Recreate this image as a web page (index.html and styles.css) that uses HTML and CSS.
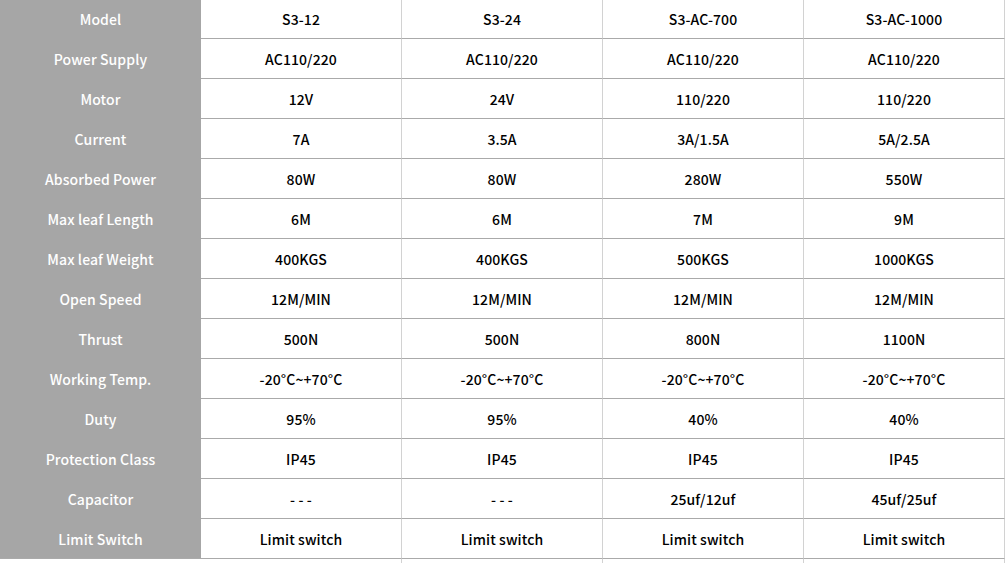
FILE: index.html
```html
<!DOCTYPE html>
<html>
<head>
<meta charset="utf-8">
<link rel="stylesheet" href="styles.css">
</head>
<body>
<table class="spec">
  <tbody>
    <tr><th>Model</th><td>S3-12</td><td>S3-24</td><td>S3-AC-700</td><td>S3-AC-1000</td></tr>
    <tr><th>Power Supply</th><td>AC110/220</td><td>AC110/220</td><td>AC110/220</td><td>AC110/220</td></tr>
    <tr><th>Motor</th><td>12V</td><td>24V</td><td>110/220</td><td>110/220</td></tr>
    <tr><th>Current</th><td>7A</td><td>3.5A</td><td>3A/1.5A</td><td>5A/2.5A</td></tr>
    <tr><th>Absorbed Power</th><td>80W</td><td>80W</td><td>280W</td><td>550W</td></tr>
    <tr><th>Max leaf Length</th><td>6M</td><td>6M</td><td>7M</td><td>9M</td></tr>
    <tr><th>Max leaf Weight</th><td>400KGS</td><td>400KGS</td><td>500KGS</td><td>1000KGS</td></tr>
    <tr><th>Open Speed</th><td>12M/MIN</td><td>12M/MIN</td><td>12M/MIN</td><td>12M/MIN</td></tr>
    <tr><th>Thrust</th><td>500N</td><td>500N</td><td>800N</td><td>1100N</td></tr>
    <tr><th>Working Temp.</th><td>-20°C~+70°C</td><td>-20°C~+70°C</td><td>-20°C~+70°C</td><td>-20°C~+70°C</td></tr>
    <tr><th>Duty</th><td>95%</td><td>95%</td><td>40%</td><td>40%</td></tr>
    <tr><th>Protection Class</th><td>IP45</td><td>IP45</td><td>IP45</td><td>IP45</td></tr>
    <tr><th>Capacitor</th><td>- - -</td><td>- - -</td><td>25uf/12uf</td><td>45uf/25uf</td></tr>
    <tr><th>Limit Switch</th><td>Limit switch</td><td>Limit switch</td><td>Limit switch</td><td>Limit switch</td></tr>
    <tr class="more"><th></th><td></td><td></td><td></td><td></td></tr>
  </tbody>
</table>
</body>
</html>
```
FILE: styles.css
```css
html, body {
  margin: 0;
  padding: 0;
  background: #ffffff;
  overflow: hidden;
}
.spec {
  border-collapse: separate;
  border-spacing: 0;
  table-layout: fixed;
  width: 1005px;
  margin-top: -2px;
  font-family: "Noto Sans CJK SC", "Microsoft YaHei", sans-serif;
  font-size: 14px;
  font-weight: 500;
  letter-spacing: 0.1px;
}
.spec th,
.spec td {
  height: 40px;
  padding: 0;
  text-align: center;
  vertical-align: middle;
  box-sizing: border-box;
  border-top: 1px solid #aaaaaa;
  line-height: 20px;
}
.spec th {
  width: 201px;
  background: #a6a6a6;
  color: #ffffff;
  font-weight: 500;
  border-top-color: #a6a6a6;
}
.spec td {
  width: 201px;
  color: #000000;
  border-right: 1px solid #d2d2d2;
}
.spec tr:first-child td {
  border-top-color: #ffffff;
}
.spec .more th {
  background: #ffffff;
  border-top-color: #aaaaaa;
}
```
